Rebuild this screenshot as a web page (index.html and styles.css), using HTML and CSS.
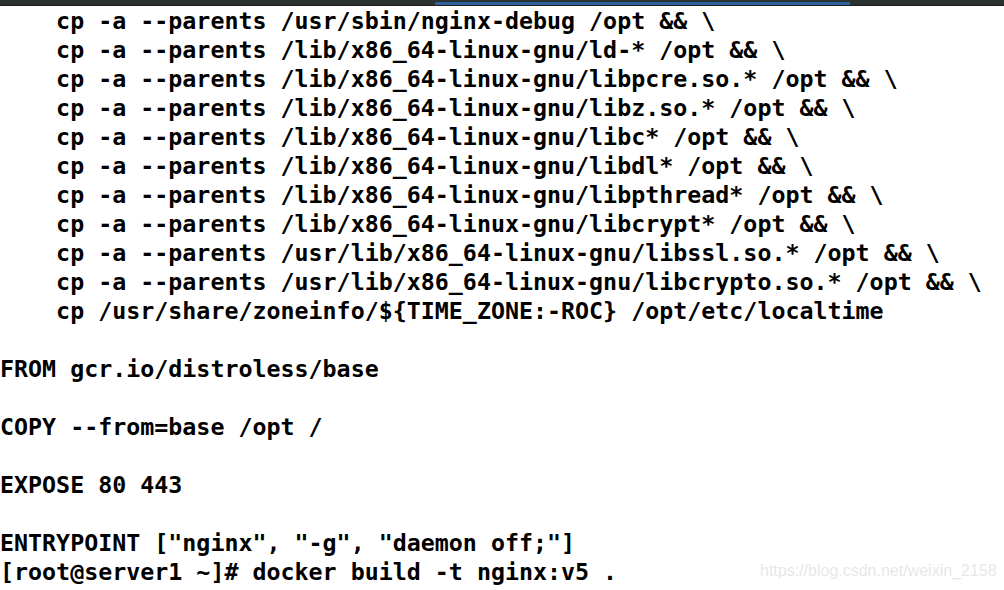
FILE: index.html
```html
<!DOCTYPE html>
<html>
<head>
<meta charset="utf-8">
<link rel="stylesheet" href="styles.css">
</head>
<body>
<div class="topbar"><div class="tab"></div></div>
<pre class="term">    cp -a --parents /usr/sbin/nginx-debug /opt &amp;&amp; \
    cp -a --parents /lib/x86_64-linux-gnu/ld-* /opt &amp;&amp; \
    cp -a --parents /lib/x86_64-linux-gnu/libpcre.so.* /opt &amp;&amp; \
    cp -a --parents /lib/x86_64-linux-gnu/libz.so.* /opt &amp;&amp; \
    cp -a --parents /lib/x86_64-linux-gnu/libc* /opt &amp;&amp; \
    cp -a --parents /lib/x86_64-linux-gnu/libdl* /opt &amp;&amp; \
    cp -a --parents /lib/x86_64-linux-gnu/libpthread* /opt &amp;&amp; \
    cp -a --parents /lib/x86_64-linux-gnu/libcrypt* /opt &amp;&amp; \
    cp -a --parents /usr/lib/x86_64-linux-gnu/libssl.so.* /opt &amp;&amp; \
    cp -a --parents /usr/lib/x86_64-linux-gnu/libcrypto.so.* /opt &amp;&amp; \
    cp /usr/share/zoneinfo/${TIME_ZONE:-ROC} /opt/etc/localtime

FROM gcr.io/distroless/base

COPY --from=base /opt /

EXPOSE 80 443

ENTRYPOINT ["nginx", "-g", "daemon off;"]
[root@server1 ~]# docker build -t nginx:v5 .
Sending build context to Docker daemon</pre>
<div class="watermark">https://blog.csdn.net/weixin_2158</div>
</body>
</html>
```

FILE: styles.css
```css
html, body {
  margin: 0;
  padding: 0;
  background: #ffffff;
  overflow: hidden;
  height: 590px;
}
body {
  position: relative;
}
.topbar {
  height: 5px;
  background: #2b3031;
  border-bottom: 1px solid #1c1f20;
  display: flex;
}
.tab {
  margin-left: 435px;
  width: 415px;
  height: 3px;
  margin-top: 2px;
  background: #2c5f9e;
}
.term {
  margin: 0;
  padding: 0;
  font-family: "DejaVu Sans Mono", monospace;
  font-weight: bold;
  font-size: 23.3px;
  line-height: 29px;
  color: #000000;
  white-space: pre;
}
.watermark {
  position: absolute;
  left: 760px;
  top: 562px;
  font-family: "Liberation Sans", Arial, sans-serif;
  font-size: 16px;
  color: rgba(225, 225, 225, 0.8);
}
```
